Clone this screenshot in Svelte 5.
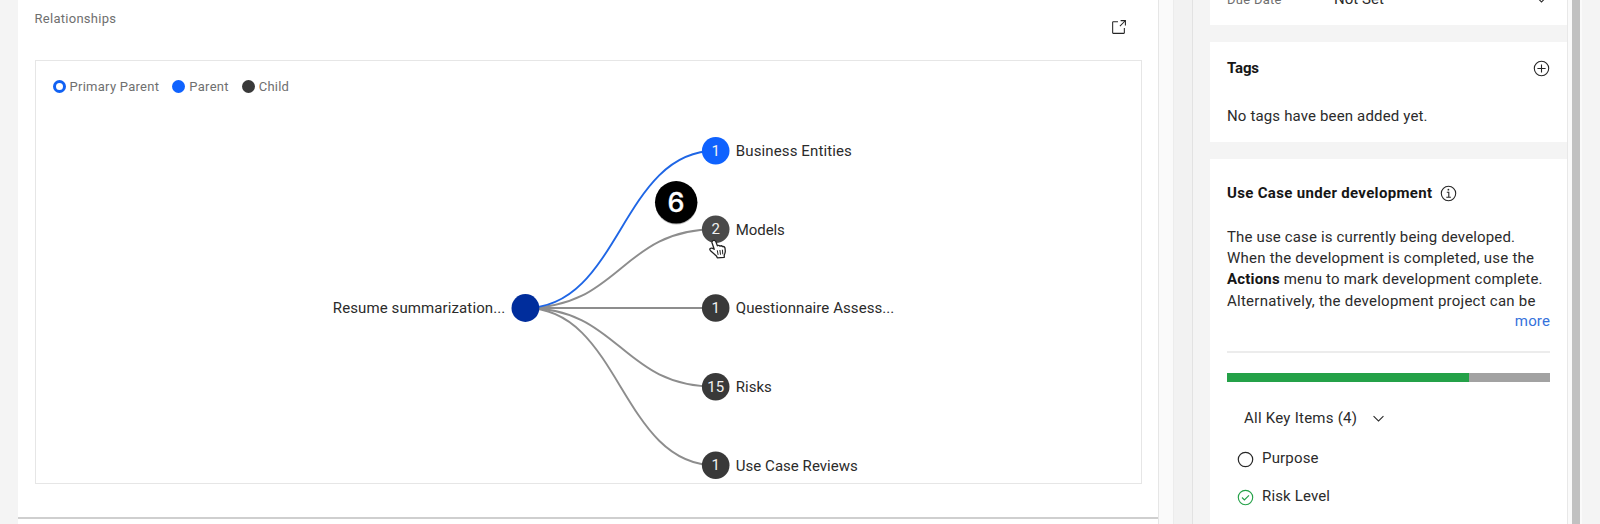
<script>
  const root = { x: 525.4, y: 308 };
  const nodes = [
    { label: 'Business Entities', count: 1, y: 150.8, width: 116, kind: 'parent' },
    { label: 'Models', count: 2, y: 229.3, width: 49, kind: 'hovered' },
    { label: 'Questionnaire Assess...', count: 1, y: 308, width: 158.5, kind: 'child' },
    { label: 'Risks', count: 15, y: 386.7, width: 36, kind: 'child' },
    { label: 'Use Case Reviews', count: 1, y: 465.3, width: 122, kind: 'child' }
  ];
  const nodeX = 715.7;
  const mid = (root.x + nodeX) / 2;
  const edge = (n) => `M${root.x},${root.y}C${mid},${root.y},${mid},${n.y},${nodeX},${n.y}`;

  const lines = [
    { text: 'The use case is currently being developed.', width: 288 },
    { text: 'When the development is completed, use the', width: 307 },
    { strong: 'Actions', text: ' menu to mark development complete.', width: 315.5 },
    { text: 'Alternatively, the development project can be', width: 308.5 }
  ];

  // Spreads the letters so that the run of text is `width` pixels wide.
  function fit(el, width) {
    const natural = el.getBoundingClientRect().width;
    const gaps = el.textContent.length;
    el.style.letterSpacing = `${((width - natural) / (gaps - 1)).toFixed(3)}px`;
  }
</script>

<div class="page">
  <main>
    <header>
      <span class="small" use:fit={81.5}>Relationships</span>
      <svg class="launch" width="17" height="17" viewBox="0 0 32 32" fill="#262626">
        <path d="M26 28H6a2 2 0 0 1-2-2V6a2 2 0 0 1 2-2h9v2H6v20h20v-9h2v9a2 2 0 0 1-2 2z" />
        <path d="M20 2v2h6.6L18 12.6l1.4 1.4L28 5.4V12h2V2z" />
      </svg>
    </header>
    <section class="graph">
      <div class="legend">
        <i class="ring"></i><span class="small" use:fit={89.5}>Primary Parent</span>
        <i class="blue"></i><span class="small" use:fit={39.3}>Parent</span>
        <i class="dark"></i><span class="small" use:fit={30}>Child</span>
      </div>
      <svg class="tree" viewBox="34 60 1107 425" width="1107" height="425">
        {#each [...nodes].reverse() as n}
          <path d={edge(n)} fill="none" stroke-width="1.9" class={n.kind} />
        {/each}
        <circle cx={root.x} cy={root.y} r="13.9" fill="#002d9c" />
        <text x="332.8" y="313.3" textLength="172.5">Resume summarization...</text>
        {#each nodes as n}
          <circle cx={nodeX} cy={n.y} r="13.8" class={n.kind} />
          <text class="count" x={nodeX} y={n.y + 5.1} text-anchor="middle">{n.count}</text>
          <text x="735.8" y={n.y + 5.3} textLength={n.width}>{n.label}</text>
        {/each}
        <circle cx="676.3" cy="203.6" r="21" fill="#000" opacity="0.28" />
        <circle cx="676.2" cy="202.3" r="21.2" fill="#000" />
        <text class="step" x="676" y="212.3" text-anchor="middle">6</text>
        <path
          d="M713.3 240.5q1.9-.6 2.6 1.3l1.5 4q1.5-1 2.5.3 1.7-.9 2.6.5 2-.4 2.5 1.4l.3 3.2q-.1 2.2-1.1 3.9l.1 2.2-7 .5-.9-1.9-5.6-4.8q-1.6-1.6-.6-2.6 1.4-1.1 4 .8l-2.1-6.3q-.5-1.9 1.2-2.5z"
          fill="#fff" stroke="#222" stroke-width="1.3" stroke-linejoin="round" />
        <path d="M717.3 250.3l.8 4.6M719.9 250l.6 4.7M722.4 249.7l.4 4.6" stroke="#222" stroke-width="1" fill="none" />
      </svg>
    </section>
    <div class="rule"></div>
  </main>

  <div class="gutter"></div>
  <div class="splitter"></div>

  <aside>
    <section class="card due">
      <div class="row due-row">
        <span class="small key"><span use:fit={54.5}>Due Date</span></span>
        <span class="value"><span use:fit={50}>Not Set</span></span>
        <svg width="17" height="17" viewBox="0 0 32 32" fill="#262626"><path d="M16 22L6 12l1.4-1.4 8.6 8.6 8.6-8.6L26 12z" /></svg>
      </div>
    </section>

    <section class="card tags">
      <div class="row between">
        <b use:fit={32}>Tags</b>
        <svg width="17" height="17" viewBox="0 0 17 17" fill="none" stroke="#262626" stroke-width="1.1">
          <circle cx="8.5" cy="8.5" r="7.2" /><path d="M8.5 4.4v8.2M4.4 8.5h8.2" />
        </svg>
      </div>
      <div class="none"><span use:fit={200.5}>No tags have been added yet.</span></div>
    </section>

    <section class="card status">
      <div class="row title">
        <b use:fit={205}>Use Case under development</b>
        <svg width="17" height="17" viewBox="0 0 17 17" fill="none" stroke="#262626" stroke-width="1.1">
          <circle cx="8.5" cy="8.5" r="7.2" />
          <path d="M6.8 7.3h2v4.9M6.3 12.2h4.6" /><circle cx="8.4" cy="4.7" r=".9" fill="#262626" stroke="none" />
        </svg>
      </div>
      <p>
        {#each lines as line}
          <span class="line"><span use:fit={line.width}>{#if line.strong}<b>{line.strong}</b>{/if}{line.text}</span></span>
        {/each}
      </p>
      <div class="more"><span use:fit={35}>more</span></div>
      <hr />
      <div class="bar"><div style="width: {75}%"></div></div>
      <div class="row filter">
        <span use:fit={113}>All Key Items (4)</span>
        <svg width="17" height="17" viewBox="0 0 32 32" fill="#262626"><path d="M16 22L6 12l1.4-1.4 8.6 8.6 8.6-8.6L26 12z" /></svg>
      </div>
      <div class="row item">
        <svg width="17" height="17" viewBox="0 0 17 17" fill="none" stroke="#262626" stroke-width="1.2"><circle cx="8.5" cy="8.5" r="7.2" /></svg>
        <span use:fit={56.5}>Purpose</span>
      </div>
      <div class="row item">
        <svg width="17" height="17" viewBox="0 0 17 17" fill="none" stroke="#24a148" stroke-width="1.15"><circle cx="8.5" cy="8.5" r="7.2" /><path d="M5 8.5l2.4 2.4 4.6-4.6" /></svg>
        <span use:fit={68}>Risk Level</span>
      </div>
    </section>
  </aside>
  <div class="scroll"><div></div></div>
</div>

<style>
  :global(body) { margin: 0; overflow: hidden; }
  .page {
    display: flex;
    width: 1600px;
    height: 524px;
    overflow: hidden;
    box-sizing: border-box;
    padding-left: 17.5px;
    background: #f4f4f4;
    color: #2b2b2b;
    font: 15px/21px Roboto, "Liberation Sans", sans-serif;
    white-space: nowrap;
  }
  svg { display: block; flex: none; }
  main { width: 1141.5px; flex: none; background: #fff; border-right: 1px solid #e6e6e6; box-sizing: border-box; }
  header { display: flex; justify-content: space-between; height: 60px; box-sizing: border-box; padding: 8px 31px 0 17px; }
  .small { font-size: 13px; color: #6f6f6f; }
  .launch { margin-top: 11px; }
  .graph { width: 1107px; height: 424px; margin-left: 17px; box-sizing: border-box; border: 1.5px solid #e6e6e6; display: grid; }
  .legend, .tree { grid-area: 1 / 1; }
  .tree { margin: -1px 0 0 -1.5px; }
  .legend { display: flex; align-items: center; height: 21px; padding: 15px 0 0 17px; }
  .legend i { width: 13px; height: 13px; border-radius: 50%; margin-right: 4px; }
  .legend i + .small { margin-right: 13px; }
  .ring { border: 3.5px solid #1061f3; box-sizing: border-box; background: #fff; }
  .blue { background: #0f62fe; }
  .dark { background: #393939; }
  .tree text { font-size: 15px; fill: #2b2b2b; }
  .tree .count { fill: #f0f0f0; }
  .tree .step { font: 500 27px Inter, sans-serif; fill: #fff; stroke: #fff; stroke-width: 0.3; }
  path.parent { stroke: #1f66e5; }
  path.child, path.hovered { stroke: #8d8d8d; }
  circle.parent { fill: #0f62fe; }
  circle.child { fill: #393939; }
  circle.hovered { fill: #4a4a4a; }
  .rule { height: 1.5px; margin-top: 33px; background: #cfcfcf; }
  .gutter { width: 15px; flex: none; background: #fafafa; border-right: 1px solid #ececec; box-sizing: border-box; }
  .splitter { width: 19px; flex: none; background: #f2f2f2; border-right: 1.5px solid #e2e2e2; box-sizing: border-box; }
  aside { width: 374px; flex: none; box-sizing: border-box; padding: 0 0 0 17px; display: flex; flex-direction: column; gap: 17px; background: #f4f4f4; }
  .card { background: #fff; box-sizing: border-box; padding: 0 17px; flex: none; }
  .row { display: flex; align-items: center; }
  .due { height: 25px; }
  .due-row { margin-top: -11px; }
  .key { width: 107px; }
  .value { flex: 1; }
  .tags { height: 100px; padding-top: 16px; }
  .between { justify-content: space-between; height: 21px; }
  .tags b, .title b, p b { color: #161616; font-weight: 700; }
  .none { margin-top: 26.5px; }
  .status { height: 382px; padding-top: 24px; }
  .title { height: 21px; gap: 8px; }
  p { margin: 23px 0 0; }
  .line { display: block; height: 21.2px; line-height: 21.2px; }
  .more { text-align: right; color: #3572dc; margin-top: -1px; }
  hr { border: 0; height: 2px; margin: 19.2px 0 0; background: #ececec; }
  .bar { height: 9px; margin-top: 20px; background: #a2a2a2; }
  .bar div { height: 100%; background: #24a148; }
  .filter { height: 21px; margin-top: 26px; padding-left: 17px; gap: 13px; }
  .item { height: 21px; margin-top: 19px; padding-left: 9.5px; gap: 8.5px; }
  .item + .item { margin-top: 17px; }
  .item svg { margin-top: 2px; }
  .scroll { flex: 1; padding: 0 20px 0 4px; border-left: 1px solid #e8e8e8; background: linear-gradient(90deg, #fafafa 14px, #f4f4f4 14px); }
  .scroll div { width: 8px; height: 100%; background: #c1c1c1; }
</style>
